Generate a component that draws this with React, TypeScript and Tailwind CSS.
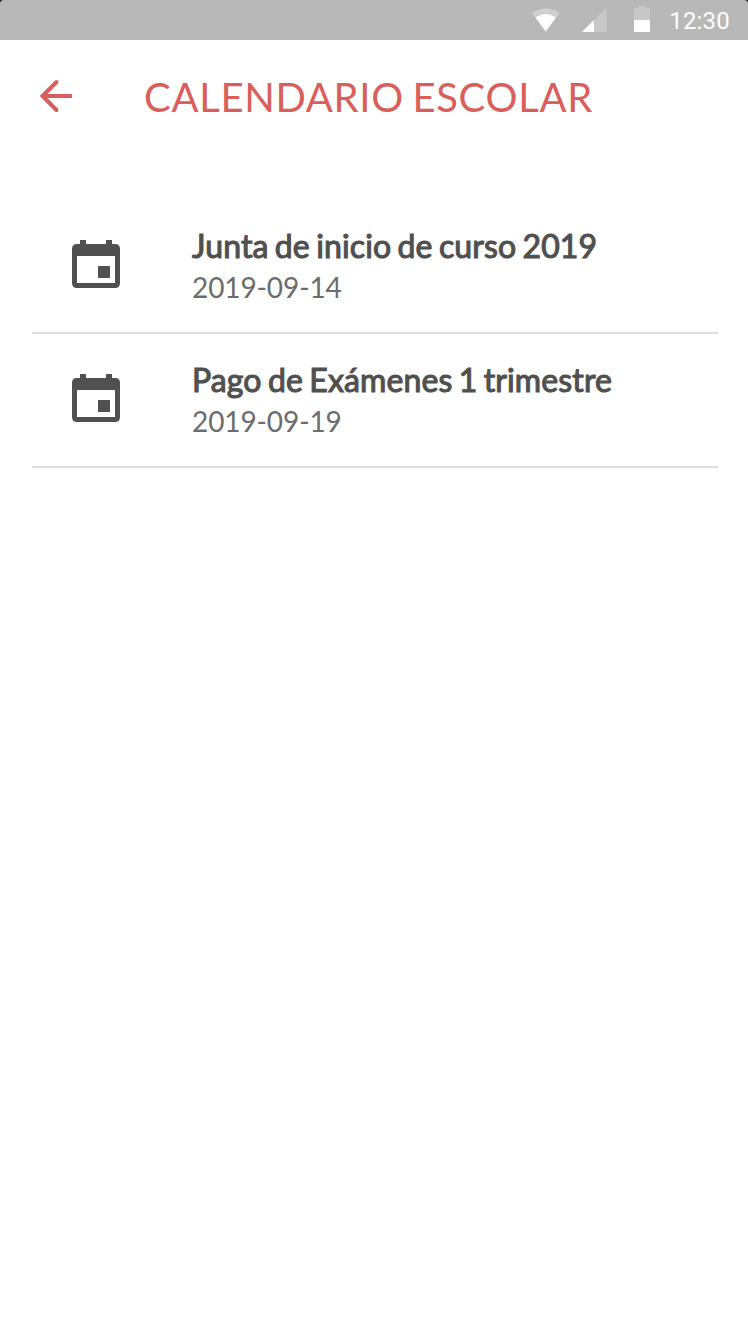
import React from 'react';

const events = [
  { title: 'Junta de inicio de curso 2019', date: '2019-09-14' },
  { title: 'Pago de Exámenes 1 trimestre', date: '2019-09-19' },
];

function StatusBar() {
  return (
    <div className="bg-[#1c1c1c]">
      <header className="flex h-10 items-center rounded-t-[4px] bg-[#b8b8b8] pr-[18px] font-['Roboto',sans-serif] text-white">
        <svg className="ml-auto h-10 w-[130px] shrink-0" viewBox="530 0 130 40" fill="white">
          <path fill="#d0d0d0" d="M532 13Q545.5 3.5 559.5 13L545.7 31.5Z" />
          <path d="M535.5 17.5Q545.5 10.5 556 17.5L545.7 31.5Z" />
          <path fill="#c8c8c8" d="M582 32L606.5 8V32Z" />
          <path d="M582 32L594 20V32Z" />
          <path fill="#c8c8c8" d="M634 8H638V6H646V8H650V20H634Z" />
          <path d="M634 20H650V32H634Z" />
        </svg>
        <time className="ml-[9px] pt-0.5 text-2xl leading-10 tracking-[0.2px]">12:30</time>
      </header>
    </div>
  );
}

function CalendarIcon() {
  return (
    <svg className="mt-10 ml-2 h-12 w-12" viewBox="0 0 48 48" fill="#505050">
      <path d="M8 0H14V4H34V0H40V4H43Q48 4 48 9V43Q48 48 43 48H5Q0 48 0 43V9Q0 4 5 4H8ZM5 16V43H43V16Z" fillRule="evenodd" />
      <path d="M26 26H38V38H26Z" />
    </svg>
  );
}

export default function App() {
  return (
    <main className="flex h-[1332px] w-[748px] flex-col bg-white font-['Lato',sans-serif]">
      <StatusBar />
      <div className="flex h-28 items-center pl-8 text-[#d9605a]">
        <button aria-label="Volver">
          <svg className="h-12 w-12" viewBox="0 0 48 48" fill="none" stroke="currentColor" strokeWidth="4">
            <path d="M40 24H11" />
            <path d="M24.5 10L10.5 24L24.5 38" strokeLinecap="round" />
          </svg>
        </button>
        <h1 className="ml-16 pt-0.5 text-[40px] leading-[48px] tracking-[0.7px] [word-spacing:-2.5px]">CALENDARIO ESCOLAR</h1>
      </div>
      <ul className="mt-12 ml-8 w-[686px]">
        {events.map((event) => (
          <li key={event.date} className="flex h-[134px] border-b-2 border-[#dedede] pl-8">
            <CalendarIcon />
            <div className="ml-[72px] pt-[23px]">
              <h2 className="text-[32px] leading-[46px] font-normal tracking-[0.12px] text-[#505050] [word-spacing:-2px] [-webkit-text-stroke:1.1px_#505050]">{event.title}</h2>
              <p className="text-[28px] leading-9 tracking-[-0.1px] text-[#6c6c6c]">{event.date}</p>
            </div>
          </li>
        ))}
      </ul>
    </main>
  );
}
